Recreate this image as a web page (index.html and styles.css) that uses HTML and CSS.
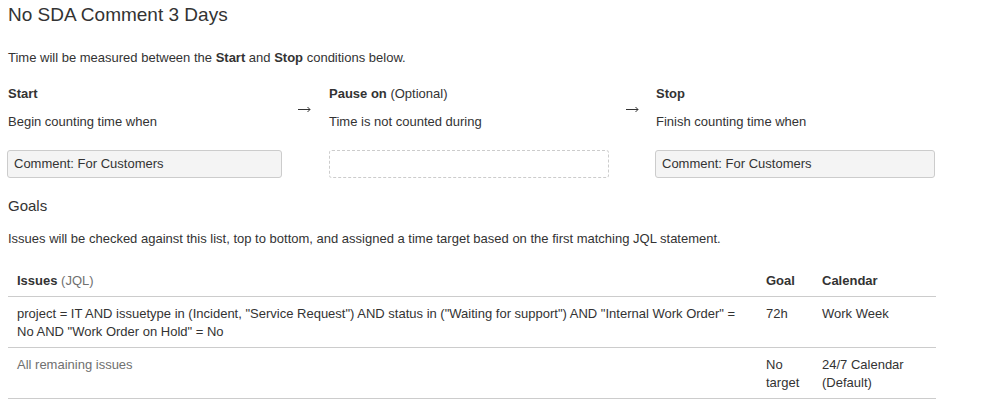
FILE: index.html
```html
<!DOCTYPE html>
<html lang="en">
<head>
  <meta charset="UTF-8">
  <title>No SDA Comment 3 Days</title>
  <link rel="stylesheet" href="styles.css">
</head>
<body>

<div class="sla">
  <h2 class="sla-title">No SDA Comment 3 Days</h2>

  <p class="intro">Time will be measured between the <b>Start</b> and <b>Stop</b> conditions below.</p>

  <!-- Conditions -->
  <div class="conditions">
    <div class="cond-label"><b>Start</b></div>
    <div class="arrow arrow-1">
      <svg width="13" height="7" viewBox="0 0 13 7"><path d="M0 3.5h12M9.5 1l2.5 2.5L9.5 6" fill="none" stroke="#333" stroke-width="1"/></svg>
    </div>
    <div class="cond-label pause"><b>Pause on</b> (Optional)</div>
    <div class="arrow arrow-2">
      <svg width="13" height="7" viewBox="0 0 13 7"><path d="M0 3.5h12M9.5 1l2.5 2.5L9.5 6" fill="none" stroke="#333" stroke-width="1"/></svg>
    </div>
    <div class="cond-label"><b>Stop</b></div>

    <div class="cond-desc">Begin counting time when</div>
    <div class="cond-desc pause">Time is not counted during</div>
    <div class="cond-desc">Finish counting time when</div>

    <div class="cond-box">Comment: For Customers</div>
    <div></div>
    <div class="cond-box empty"></div>
    <div></div>
    <div class="cond-box">Comment: For Customers</div>
  </div>

  <!-- Goals -->
  <h3 class="goals-title">Goals</h3>
  <p class="intro">Issues will be checked against this list, top to bottom, and assigned a time target based on the first matching JQL statement.</p>

  <table class="goals">
    <thead>
      <tr>
        <th class="col-jql">Issues <span class="muted">(JQL)</span></th>
        <th class="col-goal">Goal</th>
        <th class="col-cal">Calendar</th>
      </tr>
    </thead>
    <tbody>
      <tr>
        <td>project = IT AND issuetype in (Incident, "Service Request") AND status in ("Waiting for support") AND "Internal Work Order" = No AND "Work Order on Hold" = No</td>
        <td>72h</td>
        <td>Work Week</td>
      </tr>
      <tr>
        <td class="muted">All remaining issues</td>
        <td>No target</td>
        <td>24/7 Calendar (Default)</td>
      </tr>
    </tbody>
  </table>
</div>

</body>
</html>
```

FILE: styles.css
```css
body {
  font-family: 'Liberation Sans', Arial, sans-serif;
  font-size: 13px;
  color: #333;
  background: #fff;
  margin: 0;
  padding: 0 7px 0 8px;
}
.sla {
  width: 928px;
}
.sla-title {
  font-size: 19px;
  font-weight: normal;
  margin: 4px 0 0;
  line-height: 22px;
}
.intro {
  margin: 23px 0 0;
  line-height: 18px;
}
.conditions {
  display: grid;
  grid-template-columns: 275px 47px 280px 46px 280px;
  grid-template-rows: 18px 18px 28px;
  row-gap: 10px;
  margin-top: 18px;
  margin-left: -1px;
  line-height: 18px;
}
.arrow {
  grid-row: 1 / 3;
  align-self: center;
  display: flex;
  justify-content: center;
  padding-top: 3px;
}
.arrow svg { display: block; }
.arrow-1 { grid-column: 2; padding-right: 3px; }
.arrow-2 { grid-column: 4; }
.cond-label,
.cond-desc { padding-left: 1px; }
.cond-label.pause,
.cond-desc.pause { padding-left: 0; }
.conditions > .cond-desc:nth-child(6) { grid-column: 1; grid-row: 2; }
.conditions > .cond-desc:nth-child(7) { grid-column: 3; grid-row: 2; }
.conditions > .cond-desc:nth-child(8) { grid-column: 5; grid-row: 2; }
.cond-box {
  box-sizing: border-box;
  height: 28px;
  margin-top: 9px;
  padding: 4px 6px;
  background: #f4f4f4;
  border: 1px solid #ccc;
  border-radius: 3px;
  line-height: 18px;
}
.cond-box.empty {
  background: #fff;
  border: 1px dashed #ccc;
}
.goals-title {
  font-size: 15px;
  font-weight: normal;
  margin: 27px 0 0;
  line-height: 20px;
}
.goals-title + .intro {
  margin-top: 14px;
}
.goals {
  width: 928px;
  border-collapse: collapse;
  margin-top: 17px;
  line-height: 18px;
}
.goals th,
.goals td {
  text-align: left;
  vertical-align: top;
  padding: 8px 9px 6px;
  border-bottom: 1px solid #ccc;
}
.goals th {
  padding-top: 7px;
  padding-bottom: 6px;
}
.col-goal { width: 38px; }
.col-cal { width: 105px; }
.muted {
  color: #707070;
  font-weight: normal;
}
```
